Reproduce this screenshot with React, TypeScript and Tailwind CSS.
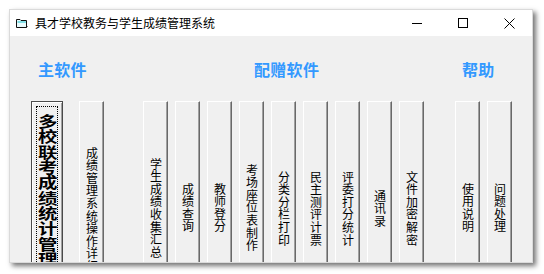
const FONT = "font-['Noto_Sans_CJK_SC','Noto_Sans',sans-serif]";

type Btn = { text: string; w: string; ml: string; top?: string };

const buttons: Btn[] = [
  { text: "成绩管理系统操作详细说明", w: "w-[25px]", ml: "ml-[16px]", top: "pt-[45px]" },
  { text: "学生成绩收集汇总", w: "w-[25px]", ml: "ml-[39px]" },
  { text: "成绩查询", w: "w-[25px]", ml: "ml-[7px]" },
  { text: "教师登分", w: "w-[25px]", ml: "ml-[7px]" },
  { text: "考场座位表制作", w: "w-[25px]", ml: "ml-[7px]" },
  { text: "分类分栏打印", w: "w-[25px]", ml: "ml-[7px]" },
  { text: "民主测评计票", w: "w-[25px]", ml: "ml-[7px]" },
  { text: "评委打分统计", w: "w-[25px]", ml: "ml-[7px]" },
  { text: "通讯录", w: "w-[25px]", ml: "ml-[7px]" },
  { text: "文件加密解密", w: "w-[25px]", ml: "ml-[7px]" },
  { text: "使用说明", w: "w-[25px]", ml: "ml-[31px]" },
  { text: "问题处理", w: "w-[25px]", ml: "ml-[7px]" },
];

function FolderIcon() {
  return (
    <svg width="12" height="11" viewBox="0 0 12 11">
      <path d="M0.5 1.5 H4 L5 2.5 H10.5 V9.5 H0.5 Z" fill="#e9fbfd" stroke="#111" strokeWidth="1" />
      <path d="M1.5 4 H10" stroke="#3ccbd8" strokeWidth="1.2" />
      <path d="M10.5 9.5 L11.5 8.5" stroke="#111" strokeWidth="1" />
    </svg>
  );
}

export default function App() {
  return (
    <div className={`w-[544px] h-[274px] bg-white pl-[9px] pt-[9px] ${FONT}`}>
      <div className="w-[524px] h-[254px] border border-[#dadada] bg-[#f0f0f0] shadow-[3px_3px_5px_rgba(0,0,0,0.55)] flex flex-col overflow-hidden">
        {/* title bar */}
        <div className="h-[26px] bg-white flex items-center shrink-0">
          <div className="ml-[6px] mt-[1px] flex items-center">
            <FolderIcon />
          </div>
          <div className="ml-[7px] text-[12px] leading-none text-black whitespace-nowrap">具才学校教务与学生成绩管理系统</div>
          <div className="flex-1" />
          <div className="w-[46px] h-full flex items-center justify-center">
            <div className="w-[10px] h-px bg-black" />
          </div>
          <div className="w-[46px] h-full flex items-center justify-center">
            <div className="w-[10px] h-[10px] border border-black" />
          </div>
          <div className="w-[46px] h-full flex items-center justify-center">
            <svg width="11" height="11" viewBox="0 0 11 11">
              <path d="M0.5 0.5 L10.5 10.5 M10.5 0.5 L0.5 10.5" stroke="#000" strokeWidth="1" />
            </svg>
          </div>
        </div>

        {/* body */}
        <div className="flex-1 relative">
          <div className="flex mt-[25px] h-[16px] text-[16px] leading-[16px] font-bold text-[#3399ff] whitespace-nowrap tracking-[0.3px]">
            <div className="ml-[28px] w-[50px]">主软件</div>
            <div className="ml-[166px] w-[68px]">配赠软件</div>
            <div className="ml-[140px] w-[34px]">帮助</div>
          </div>

          <div className="flex items-start mt-[24px] ml-[21px]">
            {/* default / focused button */}
            <div className="relative w-[32px] h-[214px] border border-[#4a4a4a] bg-[#f0f0f0] shadow-[inset_1px_1px_0_#ffffff,inset_-1px_0_0_#a0a0a0] flex flex-col items-center pt-[12px] overflow-hidden">
              <div className="absolute inset-x-[4px] top-[4px] bottom-[4px] border border-dotted border-black" />
              <div className="[writing-mode:vertical-rl] text-[15px] leading-[18px] tracking-[0.3px] font-bold text-black scale-x-[1.3] whitespace-nowrap">
                多校联考成绩统计管理系统
              </div>
            </div>

            {buttons.map((b, i) => (
              <div
                key={i}
                className={`${b.w} ${b.ml} h-[214px] bg-[#f0f0f0] border-t border-l border-white border-r border-r-[#696969] shadow-[inset_-1px_0_0_#a0a0a0] flex flex-col items-center overflow-hidden ${b.top ? `justify-start ${b.top}` : "justify-center"}`}
              >
                <div className="[writing-mode:vertical-rl] text-[12px] leading-[14px] tracking-[0.6px] text-black whitespace-nowrap">
                  {b.text}
                </div>
              </div>
            ))}
          </div>
        </div>
      </div>
    </div>
  );
}
